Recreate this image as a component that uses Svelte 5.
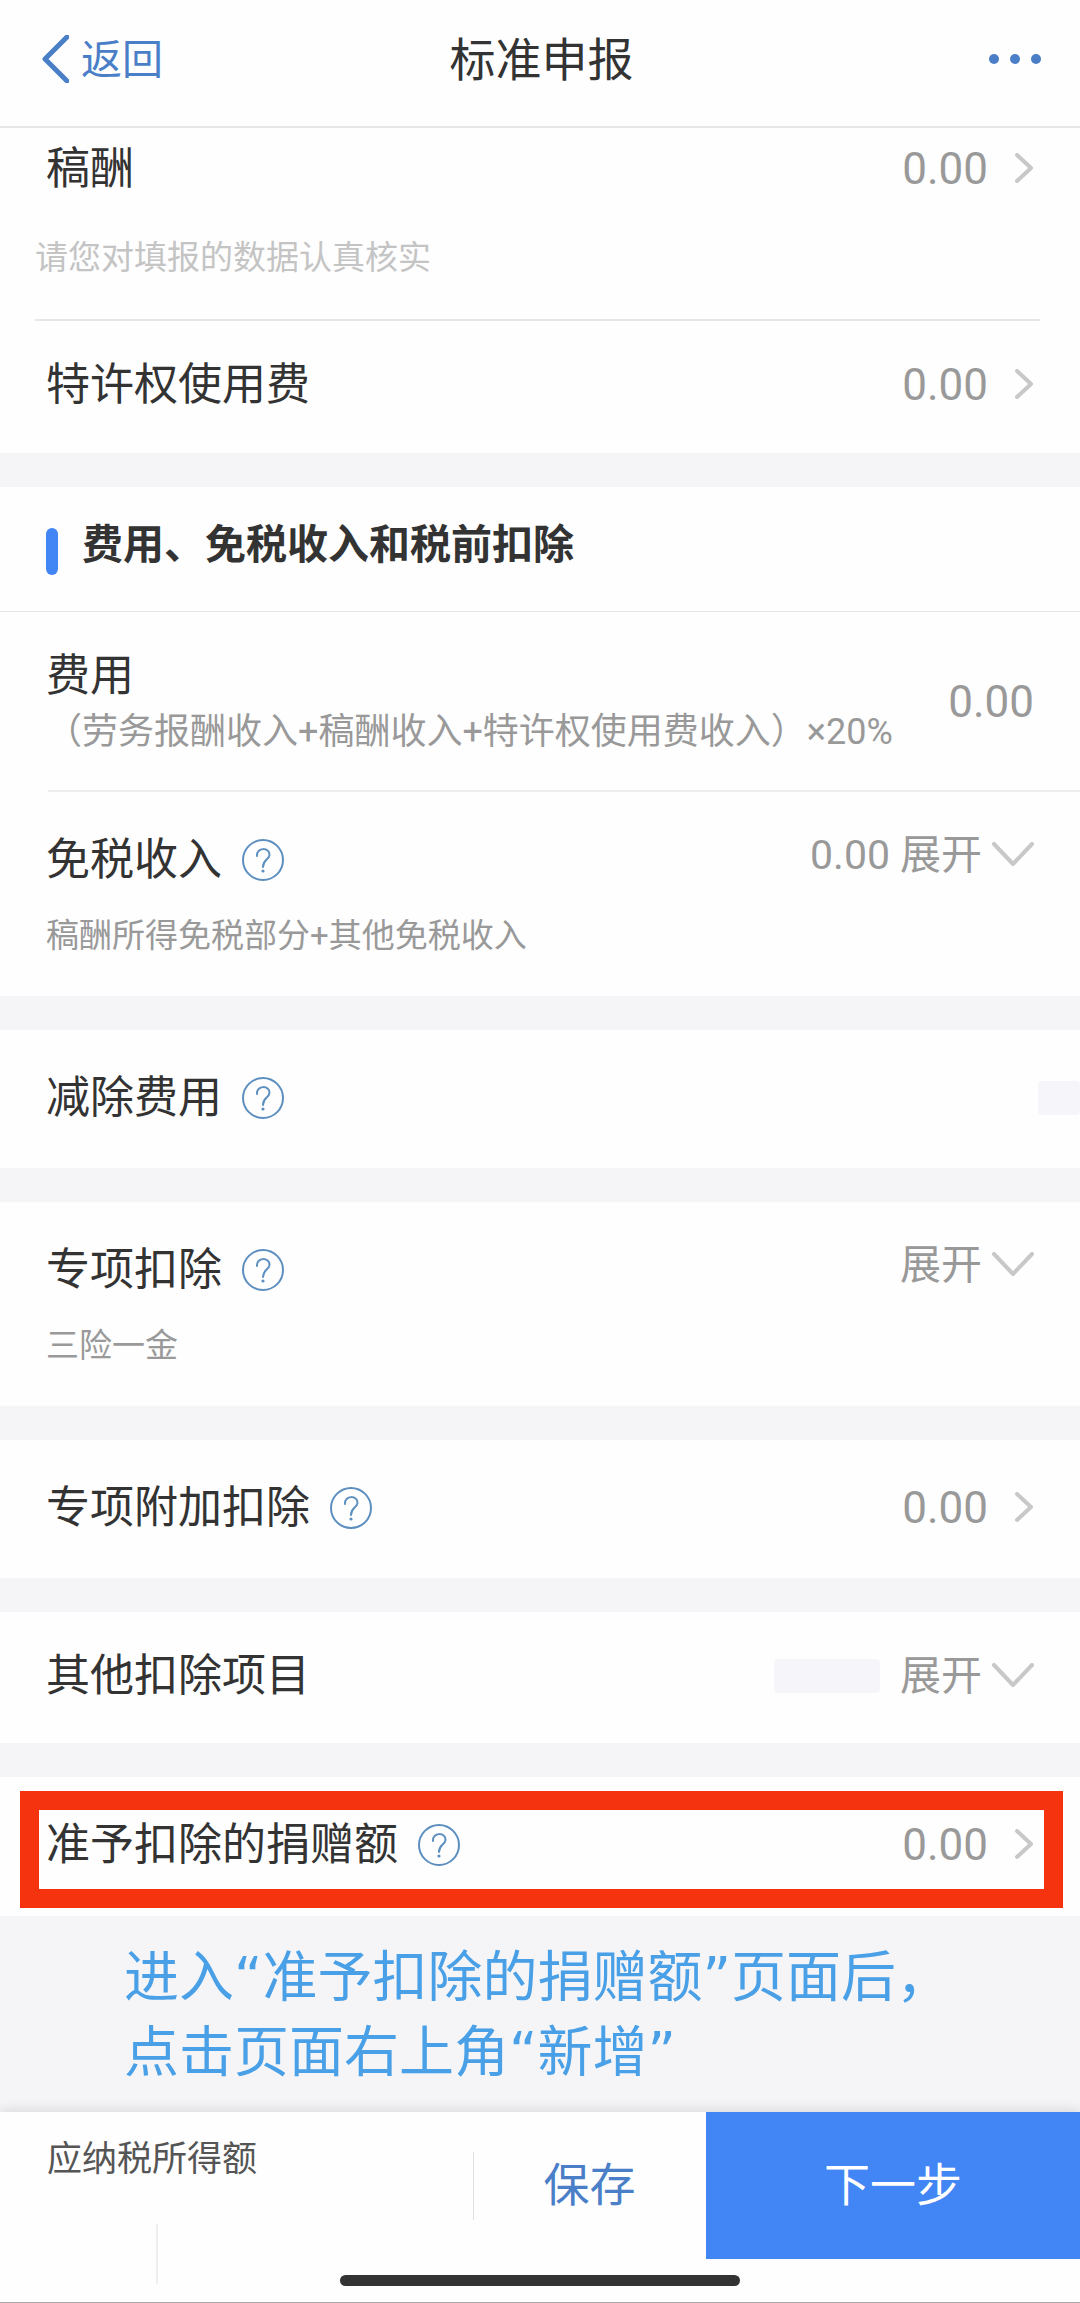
<script>
  const groups = [
    {
      rows: [
        { kind: 'first', label: '稿酬', value: '0.00', arrow: 'right', notice: '请您对填报的数据认真核实' },
        { kind: 'second', label: '特许权使用费', value: '0.00', arrow: 'right' },
      ],
    },
    {
      title: '费用、免税收入和税前扣除',
      rows: [
        {
          kind: 'cost',
          label: '费用',
          value: '0.00',
          formula: '（劳务报酬收入+稿酬收入+特许权使用费收入）×20%',
        },
        {
          kind: 'tall',
          label: '免税收入',
          help: true,
          value: '0.00',
          arrow: 'down',
          desc: '稿酬所得免税部分+其他免税收入',
        },
      ],
    },
    { rows: [{ kind: 'plain', label: '减除费用', help: true, smudge: 'edge' }] },
    { rows: [{ kind: 'tall', label: '专项扣除', help: true, arrow: 'down', desc: '三险一金' }] },
    { rows: [{ kind: 'plain', label: '专项附加扣除', help: true, value: '0.00', arrow: 'right' }] },
    { rows: [{ kind: 'low', label: '其他扣除项目', arrow: 'down', smudge: 'inline' }] },
    {
      rows: [
        { kind: 'marked', label: '准予扣除的捐赠额', help: true, value: '0.00', arrow: 'right' },
      ],
    },
  ]
</script>

<div class="page">
  <header>
    <button class="back">
      <svg width="27" height="48" viewBox="0 0 27 48">
        <path d="M25 2 L3 24 L25 46" />
      </svg>
      <span>返回</span>
    </button>
    <h1>标准申报</h1>
    <button class="more" aria-label="更多">
      <svg width="52" height="12" viewBox="0 0 52 12">
        <circle cx="5" cy="6" r="5" />
        <circle cx="26" cy="6" r="5" />
        <circle cx="47" cy="6" r="5" />
      </svg>
    </button>
  </header>

  <main>
    {#each groups as group}
      <section>
        {#if group.title}
          <h2><span class="bar"></span>{group.title}</h2>
        {/if}
        {#each group.rows as row}
          <div class="row {row.kind}">
            <div class="line">
              <div class="name">
                <span class="label">{row.label}</span>
                {#if row.help}
                  <button class="help" aria-label="{row.label}说明">
                    <svg width="42" height="42" viewBox="0 0 42 42">
                      <circle cx="21" cy="21" r="20" />
                      <path d="M15 17 C14 8 28 8 27.500 16 C27 21 21 20.500 21 28" />
                      <circle class="dot" cx="21" cy="32" r="1.600" />
                    </svg>
                  </button>
                {/if}
                {#if row.formula}
                  <p class="formula">{row.formula}</p>
                {/if}
              </div>
              {#if row.smudge}
                <span class="smudge {row.smudge}"></span>
              {/if}
              {#if row.arrow === 'down'}
                <button class="expand">
                  {#if row.value}<span>{row.value}</span>{/if}
                  展开
                  <svg width="42" height="26" viewBox="0 0 42 26">
                    <path d="M2 2 L21 22 L40 2" />
                  </svg>
                </button>
              {:else if row.arrow === 'right'}
                <button class="open" aria-label="{row.label} {row.value}">
                  {row.value}
                  <svg width="20" height="32" viewBox="0 0 20 32">
                    <path d="M3 2 L17 15 L3 28" />
                  </svg>
                </button>
              {:else if row.value}
                <span class="value">{row.value}</span>
              {/if}
            </div>
            {#if row.desc}<p class="desc">{row.desc}</p>{/if}
            {#if row.notice}<p class="notice">{row.notice}</p>{/if}
          </div>
        {/each}
      </section>
    {/each}
  </main>

  <p class="tip">进入“准予扣除的捐赠额”页面后，<br />点击页面右上角“新增”</p>

  <footer>
    <div class="actions">
      <div class="total">应纳税所得额</div>
      <button class="save">保存</button>
      <button class="next">下一步</button>
    </div>
    <div class="home"><span></span></div>
  </footer>
</div>

<style>
  :global(body) {
    margin: 0;
  }

  .page {
    display: flex;
    flex-direction: column;
    min-height: 100vh;
    background: #f5f5f8;
    color: #333;
    font-family: Roboto, 'Noto Sans CJK SC', sans-serif;
  }

  h1,
  h2,
  p {
    margin: 0;
  }

  button {
    padding: 0;
    border: 0;
    background: none;
    color: inherit;
    font: inherit;
    cursor: pointer;
  }

  svg {
    display: block;
    flex: none;
    fill: none;
    stroke-linecap: round;
    stroke-linejoin: round;
  }

  header {
    display: grid;
    grid-template-columns: 1fr auto 1fr;
    align-items: center;
    height: 118px;
    padding: 0 39px 8px 42px;
    border-bottom: 2px solid #e6e6e6;
    background: #fefefe;
  }

  h1,
  .back span {
    padding-bottom: 6px;
  }

  h1 {
    font-size: 46px;
    font-weight: 400;
  }

  .back {
    display: flex;
    align-items: center;
    gap: 12px;
    justify-self: start;
    color: #4a7fc8;
    font-size: 41px;
  }
  .back svg {
    stroke: #4a7fc8;
    stroke-width: 5;
  }

  .more {
    justify-self: end;
  }
  .more svg {
    fill: #4a7fc8;
  }

  main {
    display: flex;
    flex-direction: column;
    gap: 34px;
  }

  section {
    background: #fefefe;
  }

  h2 {
    display: flex;
    align-items: center;
    gap: 24px;
    height: 116px;
    padding: 0 46px 8px;
    border-bottom: 1px solid #e6e6e6;
    font-size: 41px;
    font-weight: 700;
    line-height: 60px;
  }
  .bar {
    width: 12px;
    height: 47px;
    margin-top: 12px;
    border-radius: 6px;
    background: #4285f4;
  }

  .row {
    box-sizing: border-box;
    padding: 0 46px;
  }

  .line {
    display: flex;
    align-items: center;
    justify-content: space-between;
    height: 60px;
  }

  .name {
    display: flex;
    flex-wrap: wrap;
    align-items: center;
    column-gap: 20px;
    margin-right: auto;
  }
  .label {
    font-size: 44px;
    line-height: 60px;
  }

  .help svg {
    stroke: #5c8fbf;
    stroke-width: 2;
  }
  .help .dot {
    fill: #5c8fbf;
    stroke: none;
  }

  .value,
  .open {
    color: #999;
    font-size: 44px;
  }
  .open,
  .expand {
    display: flex;
    align-items: center;
    line-height: 60px;
  }
  .open {
    gap: 26px;
  }
  .expand {
    gap: 10px;
    color: #999;
    font-size: 41px;
  }
  .open svg,
  .expand svg {
    stroke: #c8c8c8;
    stroke-width: 4;
  }

  .first {
    padding-top: 11px;
  }
  .first .notice {
    margin: 30px -6px 0 -11px;
    padding-bottom: 32px;
    border-bottom: 2px solid #e6e6e6;
    color: #c4c4c4;
    font-size: 33px;
    line-height: 58px;
  }
  .second {
    height: 132px;
    padding-top: 34px;
  }

  .cost {
    position: relative;
    padding-top: 34px;
    padding-bottom: 34px;
  }
  .cost::after {
    content: '';
    position: absolute;
    right: 0;
    bottom: 0;
    left: 48px;
    height: 2px;
    background: #eee;
  }
  .cost .line {
    height: 112px;
  }
  .cost .name {
    flex-direction: column;
    align-items: flex-start;
  }
  .formula {
    color: #999;
    font-size: 36px;
    line-height: 52px;
    white-space: nowrap;
  }

  .tall {
    padding-top: 38px;
  }
  .tall .expand {
    margin-bottom: 10px;
  }
  .desc {
    padding: 20px 0 34px;
    color: #999;
    font-size: 33px;
    line-height: 52px;
  }

  .plain {
    height: 138px;
    padding-top: 38px;
  }
  .low {
    height: 131px;
    padding-top: 34px;
  }

  .smudge {
    height: 34px;
    border-radius: 4px;
    background: #f6f6fa;
  }
  .smudge.edge {
    width: 42px;
    margin-right: -46px;
  }
  .smudge.inline {
    width: 106px;
    margin-right: 20px;
  }

  .marked {
    position: relative;
    height: 139px;
    padding-top: 38px;
  }
  .marked::after {
    content: '';
    position: absolute;
    inset: 14px 17px 8px 20px;
    border: 19px solid #f5330f;
    pointer-events: none;
  }

  .tip {
    flex: 1;
    padding: 24px 0 16px 124px;
    color: #4aa0e6;
    font-family: 'DejaVu Sans', 'Noto Sans CJK SC', sans-serif;
    font-size: 55px;
    line-height: 75px;
  }

  footer {
    border-bottom: 1px solid #aaa;
    background: #fefefe;
    box-shadow: 0 -2px 12px rgba(0, 0, 0, 0.12);
  }

  .actions {
    display: grid;
    grid-template-columns: 473fr 233fr 374fr;
    height: 147px;
  }
  .total {
    position: relative;
    padding: 22px 0 0 47px;
    color: #555;
    font-size: 35px;
    line-height: 52px;
  }
  .total::after {
    content: '';
    position: absolute;
    top: 112px;
    left: 33%;
    width: 2px;
    height: 60px;
    background: #eee;
  }
  .save,
  .next {
    padding-bottom: 10px;
    font-size: 46px;
  }
  .save {
    color: #4a7fc8;
    background: linear-gradient(#e0e0e0, #e0e0e0) left center / 1px 68px no-repeat;
  }
  .next {
    color: #fff;
    background: #4285f4;
  }

  .home {
    display: flex;
    justify-content: center;
    padding: 16px 0;
  }
  .home span {
    width: 37%;
    height: 11px;
    border-radius: 6px;
    background: #333;
  }
</style>
